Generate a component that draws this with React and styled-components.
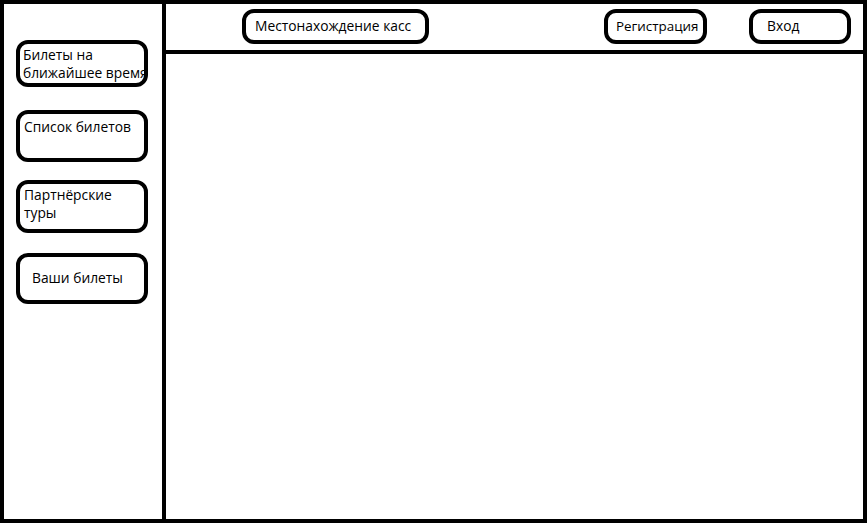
import React from "react";
import styled, { createGlobalStyle } from "styled-components";

const Global = createGlobalStyle`
  html, body { margin: 0; padding: 0; background: #fff; }
  body { font-family: "Open Sans", "Noto Sans", sans-serif; color: #000; }
  * { box-sizing: border-box; }
`;

const Frame = styled.div`
  width: 867px;
  height: 523px;
  border: 4px solid #000;
  display: grid;
  grid-template-columns: 162px 1fr;
  background: #fff;
`;

const Sidebar = styled.nav`
  border-right: 4px solid #000;
  display: flex;
  flex-direction: column;
  padding: 36px 0 0 12px;
`;

const SideButton = styled.div`
  width: 132px;
  height: ${(p) => p.$h}px;
  margin-top: ${(p) => p.$mt || 0}px;
  border: 4px solid #000;
  border-radius: 12px;
  padding: ${(p) => p.$pad};
  font-size: 13.8px;
  line-height: 18px;
  white-space: nowrap;
  overflow: visible;
  display: flex;
  flex-direction: column;
  justify-content: ${(p) => (p.$center ? "center" : "flex-start")};
`;

const Main = styled.main`
  display: flex;
  flex-direction: column;
`;

const Header = styled.header`
  height: 50px;
  border-bottom: 4px solid #000;
  display: flex;
  align-items: flex-start;
  padding: 5px 12px 0 76px;
`;

const HeadButton = styled.div`
  width: ${(p) => p.$w}px;
  height: 35px;
  margin-left: ${(p) => p.$ml || 0}px;
  border: 4px solid #000;
  border-radius: 12px;
  padding: 0 0 2px ${(p) => p.$pl}px;
  font-size: ${(p) => p.$fs || 13.8}px;
  display: flex;
  align-items: center;
  white-space: nowrap;
`;

const Spacer = styled.div`
  flex: 1;
`;

const Content = styled.section`
  flex: 1;
`;

export default function App() {
  return (
    <>
      <Global />
      <Frame>
        <Sidebar>
          <SideButton $h={47} $pad="2px 0 0 3px">
            <span>Билеты на</span>
            <span>ближайшее время</span>
          </SideButton>
          <SideButton $h={52} $mt={23} $pad="4px 0 0 4px">
            <span>Список билетов</span>
          </SideButton>
          <SideButton $h={53} $mt={18} $pad="2px 0 0 4px">
            <span>Партнёрские</span>
            <span>туры</span>
          </SideButton>
          <SideButton $h={51} $mt={20} $pad="0 0 2px 12px" $center>
            <span>Ваши билеты</span>
          </SideButton>
        </Sidebar>
        <Main>
          <Header>
            <HeadButton $w={187} $pl={9}>Местонахождение касс</HeadButton>
            <Spacer />
            <HeadButton $w={103} $pl={8} $fs={13.4}>Регистрация</HeadButton>
            <HeadButton $w={102} $ml={42} $pl={14}>Вход</HeadButton>
          </Header>
          <Content />
        </Main>
      </Frame>
    </>
  );
}
